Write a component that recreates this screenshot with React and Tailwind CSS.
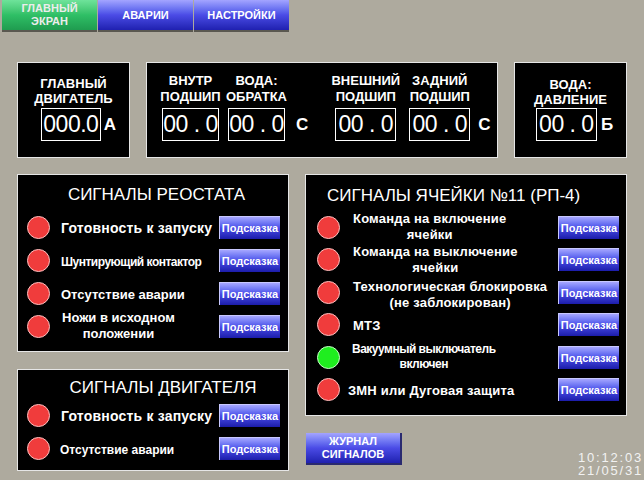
import React from "react";

const FONT = "font-['Liberation_Sans',Arial,sans-serif]";

function NavButton({ children, green }) {
  return (
    <button
      className={`w-[95px] h-[32px] flex items-center justify-center text-center text-[11px] leading-[13px] font-bold border-b-2 border-[#5a5850] ${
        green
          ? "bg-gradient-to-b from-[#6ee39a] via-[#2fbf66] to-[#1f9c4f] text-[#ececec]"
          : "bg-gradient-to-b from-[#a4a4ff] via-[#4b4be6] to-[#2020b0] text-white"
      }`}
    >
      {children}
    </button>
  );
}

function Hint() {
  return (
    <button className="w-[61px] h-[23px] shrink-0 flex items-center justify-center text-[11px] font-bold text-white bg-gradient-to-b from-[#a6a6ff] via-[#4a4ae8] to-[#1c1caa] border-t border-l border-[#c8c8ff] border-r-[#10106a] border-b-[#10106a]">
      Подсказка
    </button>
  );
}

function Lamp({ on }) {
  return (
    <div
      className={`w-[23px] h-[23px] rounded-full shrink-0 border ${
        on ? "bg-[#1fee1f] border-[#c8ffc8]" : "bg-[#f03c3c] border-[#ffc0c0]"
      }`}
    />
  );
}

function Value({ text, w }) {
  return (
    <div
      className={`${w} h-[33px] shrink-0 border border-white flex items-center justify-center text-[23px] leading-none tracking-[-0.5px] text-white whitespace-pre`}
    >
      {text}
    </div>
  );
}

function Gauge({ a, b, w }) {
  return (
    <div className={`${w} shrink-0 flex flex-col items-center`}>
      <div className="text-[13px] leading-[16px] font-bold text-white text-center whitespace-nowrap">
        {a}
        <br />
        {b}
      </div>
      <div className="mt-[3px]">
        <Value text="00 . 0" w={w} />
      </div>
    </div>
  );
}

function Unit({ children }) {
  return <div className="text-[17px] font-bold text-white leading-[33px]">{children}</div>;
}

function Row({ label, on, h, lampMl, textMl }) {
  return (
    <div className={`flex items-center ${h}`}>
      <div className={lampMl}>
        <Lamp on={on} />
      </div>
      <div className={`flex-1 ${textMl} text-white whitespace-nowrap`}>
        <div className="inline-block text-center">{label}</div>
      </div>
      <Hint />
    </div>
  );
}

const big = "text-[14px] leading-[16px] font-bold tracking-[0.2px]";
const narrow = "text-[12px] leading-[15px] font-bold tracking-[-0.5px]";
const plain12 = "text-[12px] leading-[15px] font-bold";
const mid = "text-[13px] leading-[16px] font-bold tracking-[0.2px]";
const mid0 = "text-[13px] leading-[16px] font-bold";

export default function App() {
  return (
    <div className={`w-[644px] h-[480px] bg-[#aeaa9e] overflow-hidden ${FONT}`}>
      {/* Navigation */}
      <div className="flex gap-px pl-[2px]">
        <NavButton green>
          ГЛАВНЫЙ
          <br />
          ЭКРАН
        </NavButton>
        <NavButton>АВАРИИ</NavButton>
        <NavButton>НАСТРОЙКИ</NavButton>
      </div>

      {/* Gauges */}
      <div className="flex gap-4 pl-[17px] mt-[30px]">
        <div className="w-[113px] h-[96px] bg-black border border-[#e6e6e6] flex flex-col items-center pt-[13px]">
          <div className="text-[13px] leading-[15px] font-bold text-white text-center">
            ГЛАВНЫЙ
            <br />
            ДВИГАТЕЛЬ
          </div>
          <div className="flex items-center gap-[3px] mt-[2px] ml-[10px]">
            <div className="w-[60px] h-[33px] border border-white flex items-center justify-center text-[23px] leading-none tracking-[-0.5px] text-white">
              000.0
            </div>
            <Unit>A</Unit>
          </div>
        </div>

        <div className="w-[352px] h-[96px] bg-black border border-[#e6e6e6] flex items-start pt-[10px] pl-[15px]">
          <Gauge a="ВНУТР" b="ПОДШИП" w="w-[57px]" />
          <div className="ml-[9px]">
            <Gauge a="ВОДА:" b="ОБРАТКА" w="w-[57px]" />
          </div>
          <div className="ml-[11px] mt-[35px]">
            <Unit>C</Unit>
          </div>
          <div className="ml-[27px]">
            <Gauge a="ВНЕШНИЙ" b="ПОДШИП" w="w-[61px]" />
          </div>
          <div className="ml-[13px]">
            <Gauge a="ЗАДНИЙ" b="ПОДШИП" w="w-[61px]" />
          </div>
          <div className="ml-[8px] mt-[35px]">
            <Unit>C</Unit>
          </div>
        </div>

        <div className="w-[113px] h-[96px] bg-black border border-[#e6e6e6] flex flex-col items-center pt-[14px]">
          <div className="text-[13px] leading-[15px] font-bold text-white text-center">
            ВОДА:
            <br />
            ДАВЛЕНИЕ
          </div>
          <div className="flex items-center gap-[4px] mt-[1px] ml-[8px]">
            <Value text="00 . 0" w="w-[61px]" />
            <Unit>Б</Unit>
          </div>
        </div>
      </div>

      {/* Signals */}
      <div className="flex gap-4 pl-[17px] mt-4">
        <div className="w-[272px] flex flex-col gap-[17px]">
          <div className="h-[178px] bg-black border border-[#e6e6e6] pt-[10px] pr-[8px]">
            <div className="text-[17px] leading-[20px] text-white text-center pl-[15px]">СИГНАЛЫ РЕОСТАТА</div>
            <div className="mt-[6px]">
              <Row h="h-[33px]" lampMl="ml-[9px]" textMl="ml-[11px]" label={<span className={big}>Готовность к запуску</span>} />
              <Row h="h-[33px]" lampMl="ml-[9px]" textMl="ml-[11px]" label={<span className={narrow}>Шунтирующий контактор</span>} />
              <Row h="h-[33px]" lampMl="ml-[9px]" textMl="ml-[11px]" label={<span className={mid0}>Отсутствие аварии</span>} />
              <Row
                h="h-[33px]"
                lampMl="ml-[9px]"
                textMl="ml-[12px]"
                label={
                  <div className={`${mid0} mt-[2px]`}>
                    Ножи в исходном
                    <br />
                    положении
                  </div>
                }
              />
            </div>
          </div>

          <div className="h-[102px] bg-black border border-[#e6e6e6] pt-[8px] pr-[8px]">
            <div className="text-[17px] leading-[20px] text-white text-center pl-[28px]">СИГНАЛЫ ДВИГАТЕЛЯ</div>
            <div className="mt-[1px]">
              <Row h="h-[33px]" lampMl="ml-[9px]" textMl="ml-[11px]" label={<span className={big}>Готовность к запуску</span>} />
              <Row h="h-[33px]" lampMl="ml-[9px]" textMl="ml-[10px]" label={<span className={plain12}>Отсутствие аварии</span>} />
            </div>
          </div>
        </div>

        <div className="flex-1 flex flex-col">
          <div className="w-[322px] h-[242px] bg-black border border-[#e6e6e6] pt-[11px] pr-[7px]">
            <div className="text-[17px] leading-[20px] text-white pl-[21px]">СИГНАЛЫ ЯЧЕЙКИ №11 (РП-4)</div>
            <div className="mt-[5px]">
              <Row
                h="h-[32.5px]"
                lampMl="ml-[11px]"
                textMl="ml-[13px]"
                label={
                  <div className={`${mid} mt-[3px]`}>
                    Команда на включение
                    <br />
                    ячейки
                  </div>
                }
              />
              <Row
                h="h-[32.5px]"
                lampMl="ml-[11px]"
                textMl="ml-[13px]"
                label={
                  <div className={`${mid} mt-[3px]`}>
                    Команда на выключение
                    <br />
                    ячейки
                  </div>
                }
              />
              <Row
                h="h-[32.5px]"
                lampMl="ml-[11px]"
                textMl="ml-[13px]"
                label={
                  <div className={`${mid} mt-[9px]`}>
                    Технологическая блокировка
                    <br />
                    (не заблокирован)
                  </div>
                }
              />
              <Row h="h-[32.5px]" lampMl="ml-[11px]" textMl="ml-[13px]" label={<span className={mid}>МТЗ</span>} />
              <Row
                on
                h="h-[32.5px]"
                lampMl="ml-[11px]"
                textMl="ml-[12px]"
                label={
                  <div className={`${narrow} tracking-[-0.3px] mt-[2px]`}>
                    Вакуумный выключатель
                    <br />
                    включен
                  </div>
                }
              />
              <Row h="h-[32.5px]" lampMl="ml-[11px]" textMl="ml-[8px]" label={<span className={mid}>ЗМН или Дуговая защита</span>} />
            </div>
          </div>

          <div className="flex items-start mt-[17px]">
            <button className="w-[96px] h-[32px] ml-px text-[11px] leading-[13px] font-bold text-white text-center bg-gradient-to-b from-[#a4a4ff] via-[#4b4be6] to-[#2020b0] border-b-2 border-r-2 border-[#2a2a70]">
              ЖУРНАЛ
              <br />
              СИГНАЛОВ
            </button>
            <div className="ml-auto mt-[18px] pr-px flex flex-col items-end text-[13px] leading-[13px] tracking-[1.8px] text-[#f2f2f2]">
              <div>10:12:03</div>
              <div>21/05/31</div>
            </div>
          </div>
        </div>
      </div>
    </div>
  );
}
